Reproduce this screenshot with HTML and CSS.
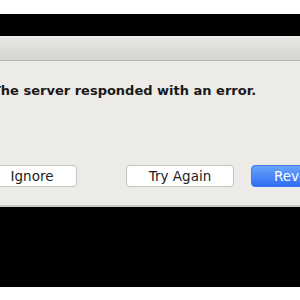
FILE: index.html
```html
<!DOCTYPE html>
<html lang="en">
<head>
    <meta charset="UTF-8">
    <title>Server Error</title>
    <link rel="stylesheet" href="styles.css">
</head>
<body>
    <div class="stage">
        <div class="window">
            <div class="titlebar"></div>
            <div class="alert-body">
                <p class="message">The server responded with an error.</p>
                <div class="actions">
                    <button class="btn btn-ignore">Ignore</button>
                    <button class="btn btn-retry">Try Again</button>
                    <button class="btn btn-primary">Revert</button>
                </div>
            </div>
        </div>
    </div>
</body>
</html>
```

FILE: styles.css
```css
body {
    margin: 0;
    background: #fff;
    font-family: 'DejaVu Sans', 'Liberation Sans', sans-serif;
}

.stage {
    margin-top: 14px;
    height: 273px;
    padding-top: 22px;
    box-sizing: border-box;
    background: #000;
    overflow: hidden;
}

.window {
    width: 400px;
    margin-left: -20px;
}

.titlebar {
    height: 25px;
    background: linear-gradient(#e9e8e4, #d4d3cd);
    border-top: 1px solid #f0efec;
    border-bottom: 1px solid #b7b6b1;
    box-sizing: border-box;
}

.alert-body {
    height: 146px;
    background: #ecebe7;
    border-bottom: 2px solid #c9c8c3;
    box-sizing: border-box;
    padding-top: 22px;
}

.message {
    margin: 0;
    padding-left: 12px;
    font-size: 13px;
    font-weight: bold;
    color: #1a1a1a;
}

.actions {
    display: flex;
    margin-top: 67px;
    padding-left: 7px;
}

.btn {
    height: 22px;
    border: 1px solid #c4c3bf;
    border-radius: 4px;
    background: #fff;
    font-family: inherit;
    font-size: 13.5px;
    color: #222;
    padding: 0;
}

.btn-ignore {
    width: 90px;
}

.btn-retry {
    width: 108px;
    margin-left: 49px;
}

.btn-primary {
    width: 90px;
    margin-left: 17px;
    border-color: #3f78f0;
    background: linear-gradient(#6aa3fa, #2e6ef4);
    color: #fff;
}
```
